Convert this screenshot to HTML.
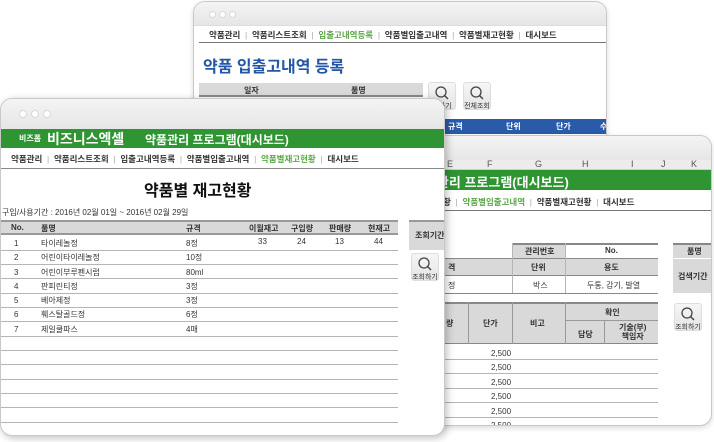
<!DOCTYPE html>
<html><head><meta charset="utf-8"><style>
*{margin:0;padding:0;box-sizing:border-box}
body{width:714px;height:442px;background:#fff;position:relative;overflow:hidden;font-family:"Liberation Sans","Noto Sans CJK KR","NanumGothic",sans-serif;color:#333}
.a{position:absolute;white-space:nowrap}
.win{position:absolute;background:#fff;border:1px solid #c8c8c8;border-radius:12px;overflow:hidden;box-shadow:0 2px 6px rgba(0,0,0,.15)}
.tb{position:absolute;left:0;right:0;top:0;background:linear-gradient(#f4f4f4,#e6e6e6)}
.dot{position:absolute;width:7px;height:7px;border-radius:50%;background:#fff;border:1px solid #d8d8d8}
.nav{font-size:8.5px;font-weight:bold;color:#333}
.g{color:#5aa845}
.sep{color:#aaa;font-weight:normal}
.btn{position:absolute;width:28px;height:28px;border-radius:3px;background:linear-gradient(#f6f6f6,#e4e4e4);border:1px solid #ddd;font-size:7px;text-align:center;color:#333}
.btn svg{display:block;margin:2px auto 0}
.gray{position:absolute;background:#d9d9d9}
.ln{position:absolute;height:1px;background:#b5b5b5}
.c{font-size:8px;color:#333}
</style></head><body>

<!-- back window -->
<div class="win" style="left:193px;top:1px;width:414px;height:170px">
 <div class="tb" style="height:24px;border-bottom:1px solid #ddd"></div>
 <div class="dot" style="left:15px;top:9px"></div><div class="dot" style="left:25px;top:9px"></div><div class="dot" style="left:35px;top:9px"></div>
 <div class="a nav" style="left:15px;top:27px">약품관리 <span class="sep">&nbsp;|&nbsp;</span> 약품리스트조회 <span class="sep">&nbsp;|&nbsp;</span> <span class="g">입출고내역등록</span> <span class="sep">&nbsp;|&nbsp;</span> 약품별입출고내역 <span class="sep">&nbsp;|&nbsp;</span> 약품별재고현황 <span class="sep">&nbsp;|&nbsp;</span> 대시보드</div>
 <div class="ln" style="left:5px;right:0;top:40px;background:#777"></div>
 <div class="a" style="left:9px;top:51px;font-size:16px;font-weight:bold;color:#2456a6">약품 입출고내역 등록</div>
 <div class="gray" style="left:5px;top:81px;width:224px;height:14px;border-bottom:2px solid #888"></div>
 <div class="a c" style="left:50px;top:83px;font-weight:bold">일자</div>
 <div class="a c" style="left:157px;top:83px;font-weight:bold">품명</div>
 <div class="btn" style="left:234px;top:80px"><svg width="16" height="16" viewBox="0 0 16 16"><circle cx="7" cy="7" r="5" fill="none" stroke="#444" stroke-width="1.3"/><path d="M10.5 10.5L14 14" stroke="#444" stroke-width="1.5"/></svg>회하기</div>
 <div class="btn" style="left:269px;top:80px"><svg width="16" height="16" viewBox="0 0 16 16"><circle cx="7" cy="7" r="5" fill="none" stroke="#444" stroke-width="1.3"/><path d="M10.5 10.5L14 14" stroke="#444" stroke-width="1.5"/></svg>전체조회</div>
 <div class="a" style="left:220px;top:117px;width:200px;height:15px;background:#2a5ba8"></div>
 <div class="a" style="left:254px;top:119px;font-size:8px;color:#fff;font-weight:bold">규격</div>
 <div class="a" style="left:312px;top:119px;font-size:8px;color:#fff;font-weight:bold">단위</div>
 <div class="a" style="left:362px;top:119px;font-size:8px;color:#fff;font-weight:bold">단가</div>
 <div class="a" style="left:406px;top:119px;font-size:8px;color:#fff;font-weight:bold">수</div>
</div>

<!-- middle window -->
<div class="win" style="left:300px;top:135px;width:412px;height:291px">
 <div class="tb" style="height:24px"></div>
 <div class="a" style="left:0;top:24px;width:412px;height:10px;background:#ececec;border-bottom:1px solid #ccc"></div>
 <div class="a" style="left:146px;top:23px;font-size:9px;color:#555">E</div>
 <div class="a" style="left:186px;top:23px;font-size:9px;color:#555">F</div>
 <div class="a" style="left:234px;top:23px;font-size:9px;color:#555">G</div>
 <div class="a" style="left:281px;top:23px;font-size:9px;color:#555">H</div>
 <div class="a" style="left:330px;top:23px;font-size:9px;color:#555">I</div>
 <div class="a" style="left:360px;top:23px;font-size:9px;color:#555">J</div>
 <div class="a" style="left:390px;top:23px;font-size:9px;color:#555">K</div>
 <div class="a" style="left:0;top:34px;width:412px;height:20px;background:#2f9533"></div>
 <div class="a" style="left:112px;top:36px;font-size:13px;font-weight:bold;color:#fff">약품관리 프로그램(대시보드)</div>
 <div class="a nav" style="left:142px;top:60px">황 <span class="sep">&nbsp;|&nbsp;</span> <span class="g">약품별입출고내역</span> <span class="sep">&nbsp;|&nbsp;</span> 약품별재고현황 <span class="sep">&nbsp;|&nbsp;</span> 대시보드</div>
 <div class="ln" style="left:0;right:0;top:74px;background:#777"></div>
 <div class="gray" style="left:211px;top:107px;width:53px;height:15px;border-top:2px solid #888"></div>
 <div class="a" style="left:264px;top:107px;width:93px;height:15px;border-top:2px solid #888"></div>
 <div class="a c" style="left:224px;top:110px;font-weight:bold">관리번호</div>
 <div class="a c" style="left:304px;top:110px;font-weight:bold">No.</div>
 <div class="gray" style="left:140px;top:122px;width:217px;height:18px;border-top:1px solid #888;border-bottom:1px solid #888"></div>
 <div class="a c" style="left:147px;top:126px;font-weight:bold">격</div>
 <div class="a c" style="left:230px;top:126px;font-weight:bold">단위</div>
 <div class="a c" style="left:303px;top:126px;font-weight:bold">용도</div>
 <div class="a c" style="left:147px;top:144px">정</div>
 <div class="a c" style="left:232px;top:144px">박스</div>
 <div class="a c" style="left:286px;top:144px">두통, 감기, 발열</div>
 <div class="ln" style="left:140px;width:217px;top:157px;background:#888"></div>
 <div class="ln" style="left:211px;width:1px;height:50px;top:107px"></div>
 <div class="ln" style="left:264px;width:1px;height:50px;top:107px"></div>
 <div class="gray" style="left:372px;top:107px;width:40px;height:15px;border-top:2px solid #888"></div>
 <div class="a c" style="left:386px;top:110px;font-weight:bold">품명</div>
 <div class="gray" style="left:372px;top:123px;width:40px;height:34px"></div>
 <div class="a c" style="left:377px;top:135px;font-weight:bold">검색기간</div>
 <div class="btn" style="left:373px;top:167px"><svg width="16" height="16" viewBox="0 0 16 16"><circle cx="7" cy="7" r="5" fill="none" stroke="#444" stroke-width="1.3"/><path d="M10.5 10.5L14 14" stroke="#444" stroke-width="1.5"/></svg>조회하기</div>
 <div class="gray" style="left:140px;top:166px;width:217px;height:42px;border-top:2px solid #888;border-bottom:1px solid #888"></div>
 <div class="ln" style="left:167px;width:1px;height:42px;top:166px;background:#999"></div>
 <div class="ln" style="left:211px;width:1px;height:42px;top:166px;background:#999"></div>
 <div class="ln" style="left:264px;width:1px;height:42px;top:166px;background:#999"></div>
 <div class="ln" style="left:303px;width:1px;height:24px;top:184px;background:#999"></div>
 <div class="ln" style="left:264px;width:93px;top:184px;background:#999"></div>
 <div class="a c" style="left:145px;top:182px;font-weight:bold">량</div>
 <div class="a c" style="left:182px;top:182px;font-weight:bold">단가</div>
 <div class="a c" style="left:229px;top:182px;font-weight:bold">비고</div>
 <div class="a c" style="left:304px;top:171px;font-weight:bold">확인</div>
 <div class="a c" style="left:277px;top:193px;font-weight:bold">담당</div>
 <div class="a c" style="left:318px;top:187px;font-weight:bold;text-align:center;line-height:9px">기술(부)<br>책임자</div>
 <div class="a c" style="left:190px;top:211px;line-height:14.4px;text-align:right">2,500<br>2,500<br>2,500<br>2,500<br>2,500<br>2,500</div>
 <div class="ln" style="left:140px;width:217px;top:223px"></div>
 <div class="ln" style="left:140px;width:217px;top:237px"></div>
 <div class="ln" style="left:140px;width:217px;top:252px"></div>
 <div class="ln" style="left:140px;width:217px;top:266px"></div>
 <div class="ln" style="left:140px;width:217px;top:281px"></div>
</div>

<!-- front window -->
<div class="win" style="left:0;top:98px;width:445px;height:338px;border-radius:12px;box-shadow:2px 2px 8px rgba(0,0,0,.25)">
 <div class="tb" style="height:30px"></div>
 <div class="dot" style="left:18px;top:11px;width:8px;height:8px"></div><div class="dot" style="left:30px;top:11px;width:8px;height:8px"></div><div class="dot" style="left:42px;top:11px;width:8px;height:8px"></div>
 <div class="a" style="left:0;top:30px;width:445px;height:19px;background:#2f9533"></div>
 <div class="a" style="left:18px;top:34px;font-size:8px;color:#fff;font-weight:bold">비즈폼</div>
 <div class="a" style="left:46px;top:30px;font-size:14px;color:#fff;font-weight:bold">비즈니스엑셀</div>
 <div class="a" style="left:144px;top:32px;font-size:12px;color:#fff;font-weight:bold">약품관리 프로그램(대시보드)</div>
 <div class="a nav" style="left:10px;top:54px">약품관리 <span class="sep">&nbsp;|&nbsp;</span> 약품리스트조회 <span class="sep">&nbsp;|&nbsp;</span> 입출고내역등록 <span class="sep">&nbsp;|&nbsp;</span> 약품별입출고내역 <span class="sep">&nbsp;|&nbsp;</span> <span class="g">약품별재고현황</span> <span class="sep">&nbsp;|&nbsp;</span> 대시보드</div>
 <div class="ln" style="left:0;right:0;top:69px;background:#888"></div>
 <div class="a" style="left:143px;top:78px;font-size:16px;font-weight:bold;color:#111">약품별 재고현황</div>
 <div class="a c" style="left:1px;top:108px">구입/사용기간 : 2016년 02월 01일 ~ 2016년 02월 29일</div>
 <div class="gray" style="left:0;top:121px;width:397px;height:15px;border-top:2px solid #999;border-bottom:2px solid #999"></div>
 <div class="a c" style="left:10px;top:124px;font-weight:bold">No.</div>
 <div class="a c" style="left:40px;top:124px;font-weight:bold">품명</div>
 <div class="a c" style="left:185px;top:124px;font-weight:bold">규격</div>
 <div class="a c" style="left:248px;top:124px;font-weight:bold">이월재고</div>
 <div class="a c" style="left:290px;top:124px;font-weight:bold">구입량</div>
 <div class="a c" style="left:328px;top:124px;font-weight:bold">판매량</div>
 <div class="a c" style="left:367px;top:124px;font-weight:bold">현재고</div>
 <div class="a c" style="left:13px;top:138px;line-height:14.3px">1<br>2<br>3<br>4<br>5<br>6<br>7</div>
 <div class="a c" style="left:40px;top:138px;line-height:14.3px">타이레놀정<br>어린이타이레놀정<br>어린이부루펜시럽<br>판피린티정<br>베아제정<br>훼스탈골드정<br>제일쿨파스</div>
 <div class="a c" style="left:185px;top:138px;line-height:14.3px">8정<br>10정<br>80ml<br>3정<br>3정<br>6정<br>4매</div>
 <div class="a c" style="left:257px;top:138px">33</div>
 <div class="a c" style="left:296px;top:138px">24</div>
 <div class="a c" style="left:334px;top:138px">13</div>
 <div class="a c" style="left:373px;top:138px">44</div>
 <div class="ln" style="left:0;width:397px;top:151px"></div>
 <div class="ln" style="left:0;width:397px;top:165px"></div>
 <div class="ln" style="left:0;width:397px;top:179px"></div>
 <div class="ln" style="left:0;width:397px;top:194px"></div>
 <div class="ln" style="left:0;width:397px;top:208px"></div>
 <div class="ln" style="left:0;width:397px;top:222px"></div>
 <div class="ln" style="left:0;width:397px;top:237px"></div>
 <div class="ln" style="left:0;width:397px;top:251px"></div>
 <div class="ln" style="left:0;width:397px;top:265px"></div>
 <div class="ln" style="left:0;width:397px;top:280px"></div>
 <div class="ln" style="left:0;width:397px;top:294px"></div>
 <div class="ln" style="left:0;width:397px;top:308px"></div>
 <div class="ln" style="left:0;width:397px;top:323px"></div>
 <div class="gray" style="left:408px;top:121px;width:37px;height:30px;border-top:2px solid #999"></div>
 <div class="a c" style="left:414px;top:131px;font-weight:bold">조회기간</div>
 <div class="btn" style="left:410px;top:154px"><svg width="16" height="16" viewBox="0 0 16 16"><circle cx="7" cy="7" r="5" fill="none" stroke="#444" stroke-width="1.3"/><path d="M10.5 10.5L14 14" stroke="#444" stroke-width="1.5"/></svg>조회하기</div>
</div>
</body></html>
